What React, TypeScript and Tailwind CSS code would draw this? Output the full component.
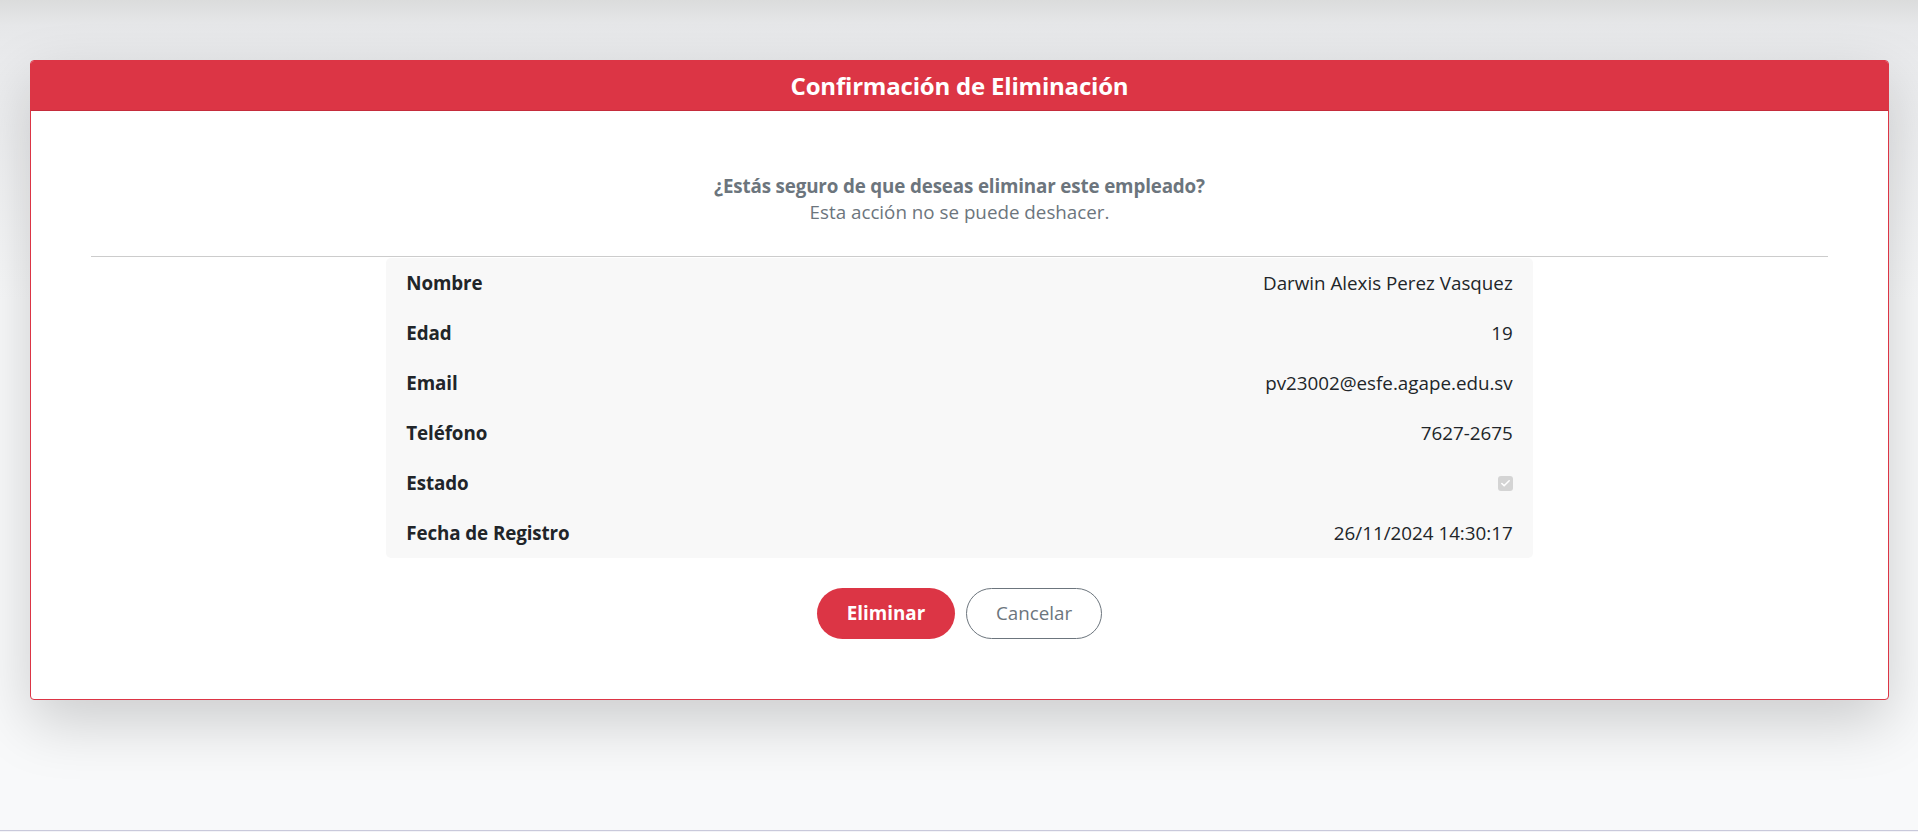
import { Check } from "lucide-react";

const empleado = [
  { label: "Nombre", value: "Darwin Alexis Perez Vasquez" },
  { label: "Edad", value: "19" },
  { label: "Email", value: "pv23002@esfe.agape.edu.sv" },
  { label: "Teléfono", value: "7627-2675" },
  { label: "Estado", value: null },
  { label: "Fecha de Registro", value: "26/11/2024 14:30:17" },
];

function DisabledCheck() {
  return (
    <span className="w-[15px] h-[15px] rounded-[3px] bg-[#d4d4d4] flex items-center justify-center">
      <Check size={11} strokeWidth={3.5} className="text-white" />
    </span>
  );
}

export default function App() {
  return (
    <div
      className="h-[832px] w-full flex flex-col bg-[linear-gradient(to_bottom,#dbdcdc_0px,#e6e7e9_25px,#eaebed_60px,#f8f9fa_300px)] text-[#212529]"
      style={{ fontFamily: '"Open Sans", "Noto Sans", sans-serif' }}
    >
      <main className="flex-1 pt-[60px] pl-[30px] pr-[29px]">
        <div className="bg-white border border-[#dc3545] rounded-[4px] overflow-hidden shadow-[0_22px_60px_rgba(0,0,0,0.18)]">
          {/* Header */}
          <div className="h-[50px] bg-[#dc3545] border-b border-[#c52c3b] flex items-center justify-center">
            <h4 className="text-white font-bold text-[24px] leading-none tracking-[-0.2px]">
              Confirmación de Eliminación
            </h4>
          </div>

          {/* Body */}
          <div className="px-[60px] pt-[62px] pb-[60px]">
            <div className="text-center text-[#6c757d] text-[18.8px] leading-[26px]">
              <p className="font-bold tracking-[-0.15px]">¿Estás seguro de que deseas eliminar este empleado?</p>
              <p>Esta acción no se puede deshacer.</p>
            </div>

            <hr className="mt-[31px] border-0 border-t border-[#cccccc]" />

            <div className="w-[66%] mx-auto bg-[#f8f8f8] rounded-[5px] mt-px">
              {empleado.map((row) => (
                <div key={row.label} className="h-[50px] px-[20px] flex items-center justify-between text-[18.8px]">
                  <span className="font-bold tracking-[-0.1px]">{row.label}</span>
                  {row.value === null ? <DisabledCheck /> : <span>{row.value}</span>}
                </div>
              ))}
            </div>

            <div className="flex justify-center gap-[11px] mt-[30px]">
              <button className="w-[138px] h-[51px] rounded-full bg-[#dc3545] text-white font-bold text-[18.8px]">
                Eliminar
              </button>
              <button className="w-[136px] h-[51px] rounded-full border border-[#6c757d] bg-white text-[#6c757d] text-[18.8px]">
                Cancelar
              </button>
            </div>
          </div>
        </div>
      </main>
      <div className="h-[2px] border-t border-[#c9c9db] bg-[#f4f4f8]" />
    </div>
  );
}
